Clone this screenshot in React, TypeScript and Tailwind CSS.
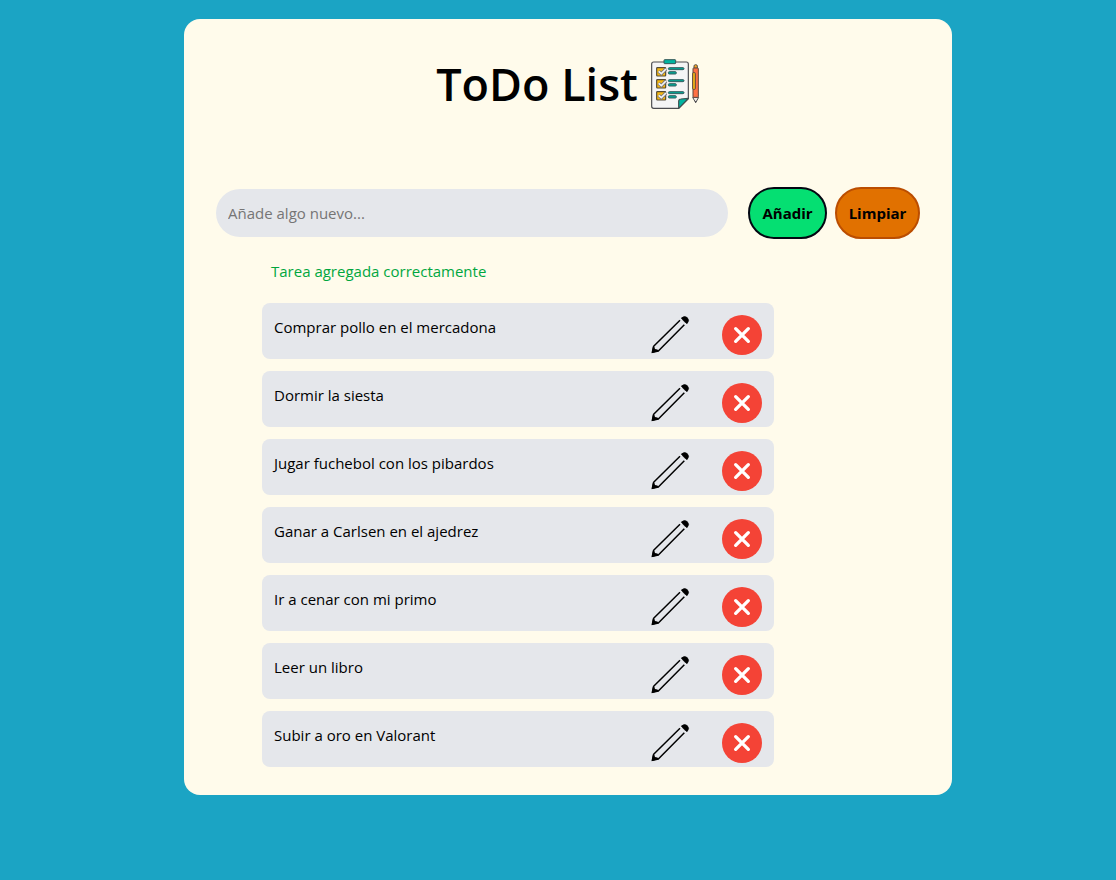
import { useState } from "react";
import type { FormEvent } from "react";

const initialTasks = [
  "Comprar pollo en el mercadona",
  "Dormir la siesta",
  "Jugar fuchebol con los pibardos",
  "Ganar a Carlsen en el ajedrez",
  "Ir a cenar con mi primo",
  "Leer un libro",
  "Subir a oro en Valorant",
];

function ChecklistIcon() {
  return (
    <svg viewBox="27 27 150 150" className="size-[50px] shrink-0" aria-hidden="true">
      <path
        d="M38 36H136Q142 36 142 42V146L113 175H38Q32 175 32 169V42Q32 36 38 36Z"
        fill="#f5f5f5"
        stroke="#4b4b4f"
        strokeWidth="3.5"
      />
      <path d="M113 175V154Q113 147 120 147L142 145Z" fill="#00b5a0" stroke="#3f4f50" strokeWidth="3.5" strokeLinejoin="round" />
      <rect x="69" y="29" width="35" height="12" rx="2" fill="#00b5a0" stroke="#35595a" strokeWidth="3" />
      {[0, 36, 72].map((dy) => (
        <g key={dy} transform={`translate(0 ${dy})`}>
          <rect x="47" y="53" width="27" height="25" rx="2" fill="#f7b912" stroke="#544b36" strokeWidth="3.5" />
          <path d="M53 64L61 71L75 57" fill="none" stroke="#77777c" strokeWidth="10" />
          <path d="M53 64L61 71L75 57" fill="none" stroke="#f5f5f5" strokeWidth="5" />
          <rect x="82" y="53" width="47" height="6" rx="3" fill="#00a895" stroke="#355d60" strokeWidth="3" />
          <rect x="82" y="65" width="24" height="7" rx="3" fill="#00a895" stroke="#355d60" strokeWidth="3" />
        </g>
      ))}
      <path d="M159 55V48Q159 44 164 44Q169 44 169 48V55Z" fill="#f7a823" stroke="#57504a" strokeWidth="3" />
      <path d="M155 142H173L164 158Z" fill="#f3eee8" stroke="#4b4b4f" strokeWidth="3" strokeLinejoin="round" />
      <path d="M162 153H167L164 159Z" fill="#4b4b4f" />
      <rect x="156" y="54" width="16" height="88" rx="2" fill="#ff7043" stroke="#5a4741" strokeWidth="3" />
      <rect x="155" y="68" width="8" height="50" rx="2" fill="#f7b912" stroke="#5a4741" strokeWidth="3" />
    </svg>
  );
}

function PencilIcon() {
  return (
    <svg viewBox="0 0 120 120" className="size-10" aria-hidden="true">
      <path d="M90 16L11 94L7 112L25 108L103 29" fill="none" stroke="#000" strokeWidth="4.5" strokeLinejoin="round" />
      <path d="M5 115L9 93Q14 95 15 102Q23 102 27 108Z" fill="#000" />
      <path d="M94 9Q104 1 112 8Q120 16 111 26Q101 20 94 9Z" fill="#000" stroke="#000" strokeWidth="2" strokeLinejoin="round" />
    </svg>
  );
}

function DeleteIcon() {
  return (
    <svg viewBox="0 0 120 120" className="size-10" aria-hidden="true">
      <circle cx="60" cy="60" r="60" fill="#f44336" />
      <path d="M41 41L79 79M79 41L41 79" stroke="#fff" strokeWidth="10" strokeLinecap="round" />
    </svg>
  );
}

export default function App() {
  const [tasks, setTasks] = useState(initialTasks);
  const [draft, setDraft] = useState("");
  const [message, setMessage] = useState("Tarea agregada correctamente");

  const addTask = (event: FormEvent) => {
    event.preventDefault();
    if (!draft.trim()) return;
    setTasks([...tasks, draft.trim()]);
    setDraft("");
    setMessage("Tarea agregada correctamente");
  };

  const editTask = (index: number) => {
    setDraft(tasks[index]);
    setTasks(tasks.filter((_, i) => i !== index));
  };

  return (
    <div className="min-h-screen bg-[#1ba4c4] py-[19px] pl-5 font-['Segoe_UI','Open_Sans',sans-serif] text-[15px] leading-6 text-black">
      <main className="mx-auto w-full max-w-3xl rounded-2xl bg-amber-50 px-8 pt-10 pb-7">
        <h1 className="flex items-center justify-center gap-3 text-[45px] leading-[50px] font-semibold">
          ToDo List
          <ChecklistIcon />
        </h1>

        <form onSubmit={addTask} className="mt-[78px] flex items-center">
          <input
            type="text"
            aria-label="Nueva tarea"
            value={draft}
            onChange={(event) => setDraft(event.target.value)}
            placeholder="Añade algo nuevo..."
            className="h-12 min-w-0 flex-1 rounded-full bg-gray-200 px-3 outline-none placeholder:text-[#757575]"
          />
          <button
            type="submit"
            className="ml-5 h-[52px] w-[79px] rounded-full border-2 border-gray-950 bg-green-400 font-bold"
          >
            Añadir
          </button>
          <button
            type="button"
            onClick={() => setTasks([])}
            className="ml-2 h-[52px] w-[85px] rounded-full border-2 border-amber-700 bg-amber-600 font-bold"
          >
            Limpiar
          </button>
        </form>

        <p className="mt-5 ml-[55px] text-green-600" role="status">
          {message}
        </p>

        <ul className="mt-5 ml-[46px] flex max-w-lg flex-col gap-3">
          {tasks.map((task, index) => (
            <li key={index} className="flex items-start gap-8 rounded-lg bg-gray-200 px-3 pt-3 pb-1">
              <span className="flex-1">{task}</span>
              <button type="button" aria-label={`Editar ${task}`} onClick={() => editTask(index)}>
                <PencilIcon />
              </button>
              <button
                type="button"
                aria-label={`Eliminar ${task}`}
                onClick={() => setTasks(tasks.filter((_, i) => i !== index))}
              >
                <DeleteIcon />
              </button>
            </li>
          ))}
        </ul>
      </main>
    </div>
  );
}
